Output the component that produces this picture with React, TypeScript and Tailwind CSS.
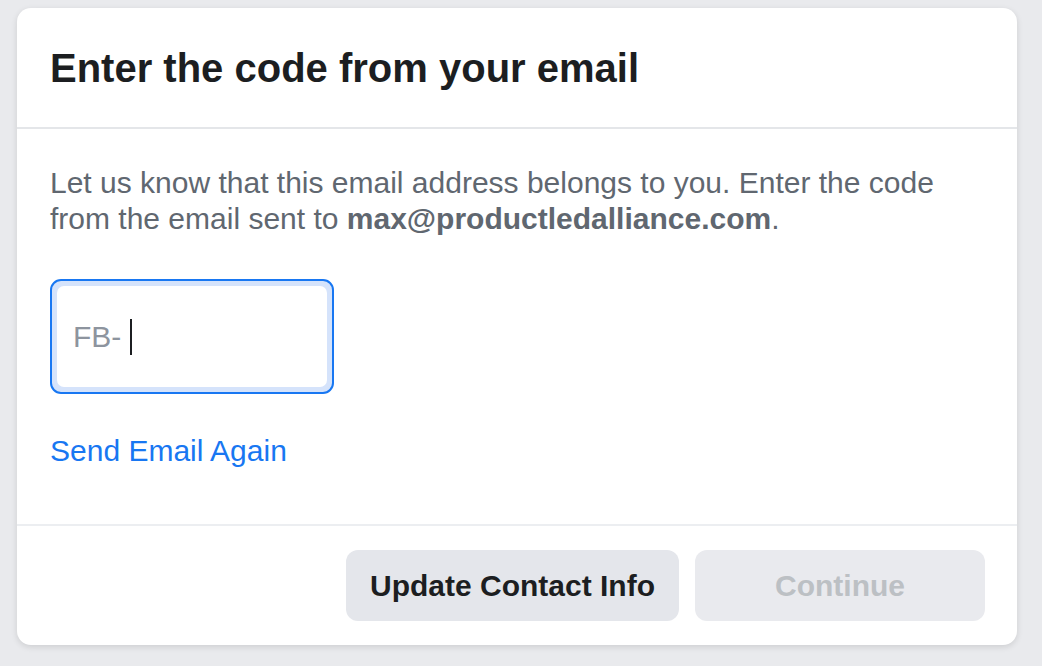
export default function App() {
  return (
    <div
      className="w-[1042px] h-[666px] bg-[#e9eaed] pt-[8px] pl-[17px]"
      style={{ fontFamily: '"Liberation Sans", Arial, sans-serif' }}
    >
      <div className="w-[1000px] h-[637px] bg-white rounded-[14px] shadow-[0_2px_6px_rgba(0,0,0,0.12)] flex flex-col">
        {/* Header */}
        <div className="h-[121px] border-b-2 border-[#e4e6e9] flex items-center px-[33px]">
          <h1 className="text-[40px] font-bold text-[#1c1e21] leading-none">
            Enter the code from your email
          </h1>
        </div>

        {/* Body */}
        <div className="flex-1 px-[33px] pt-[36px] border-b-2 border-[#eceef1]">
          <p className="text-[30px] leading-[36px] text-[#606770]">
            Let us know that this email address belongs to you. Enter the code
            from the email sent to <span className="font-bold">max@productledalliance.com</span>.
          </p>

          <div className="mt-[42px] w-[284px] h-[115px] rounded-[11px] border-2 border-[#1877f2] p-[5px] bg-[#d5e3fb]">
            <div className="w-full h-full bg-white rounded-[7px] flex items-center pl-[16px]">
              <span className="text-[30px] text-[#8d949e]">FB-</span>
              <span className="ml-[9px] w-[2px] h-[36px] bg-[#1c1e21]" />
            </div>
          </div>

          <div className="mt-[34px] text-[30px] text-[#1877f2]">Send Email Again</div>
        </div>

        {/* Footer */}
        <div className="h-[119px] flex items-center justify-end gap-[16px] pr-[32px]">
          <button className="w-[333px] h-[71px] rounded-[12px] bg-[#e4e6eb] text-[30px] font-bold text-[#1c1e21]">
            Update Contact Info
          </button>
          <button className="w-[290px] h-[71px] rounded-[12px] bg-[#e9eaee] text-[30px] font-bold text-[#bcc0c4]">
            Continue
          </button>
        </div>
      </div>
    </div>
  );
}
